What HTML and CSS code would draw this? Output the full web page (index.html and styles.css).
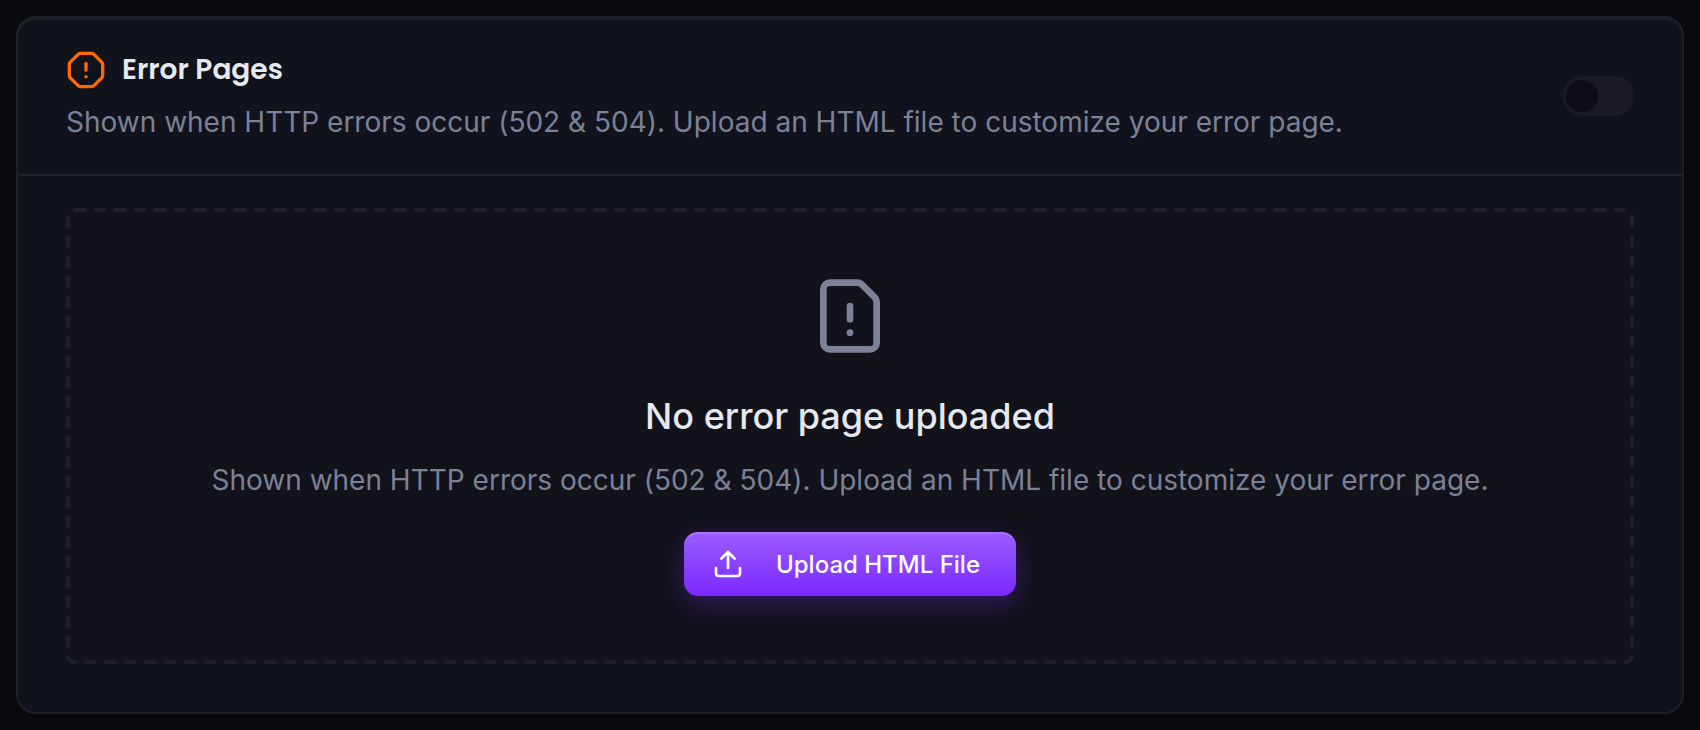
FILE: index.html
```html
<!DOCTYPE html>
<html lang="en">

<head>
    <meta charset="UTF-8">
    <meta name="viewport" content="width=device-width, initial-scale=1.0">
    <title>Error Pages</title>
    <link rel="stylesheet" href="styles.css">
</head>

<body>
    <section class="card">
        <header class="card-header">
            <div class="card-heading">
                <h2 class="card-title">
                    <svg class="icon icon-alert" viewBox="0 0 24 24" aria-hidden="true">
                        <path d="M12 16h.01" />
                        <path d="M12 8v4" />
                        <path d="M15.312 2a2 2 0 0 1 1.414.586l4.688 4.688A2 2 0 0 1 22 8.688v6.624a2 2 0 0 1-.586 1.414l-4.688 4.688a2 2 0 0 1-1.414.586H8.688a2 2 0 0 1-1.414-.586l-4.688-4.688A2 2 0 0 1 2 15.312V8.688a2 2 0 0 1 .586-1.414l4.688-4.688A2 2 0 0 1 8.688 2z" />
                    </svg>
                    <label for="errorPages">Error Pages</label>
                </h2>
                <p class="description">Shown when HTTP errors occur (502 &amp; 504). Upload an HTML file to customize your error page.</p>
            </div>
            <input type="checkbox" role="switch" id="errorPages" class="switch">
        </header>

        <div class="card-body">
            <div class="dropzone">
                <svg class="dropzone-outline" aria-hidden="true">
                    <rect x="2" y="2" rx="6" />
                </svg>
                <svg class="icon icon-file" viewBox="0 0 24 24" aria-hidden="true">
                    <path d="M6 22a2 2 0 0 1-2-2V4a2 2 0 0 1 2-2h8a2.4 2.4 0 0 1 1.704.706l3.588 3.588A2.4 2.4 0 0 1 20 8v12a2 2 0 0 1-2 2z" />
                    <path d="M12 9v4" />
                    <path d="M12 17h.01" />
                </svg>
                <h3 class="dropzone-title">No error page uploaded</h3>
                <p class="description">Shown when HTTP errors occur (502 &amp; 504). Upload an HTML file to customize your error page.</p>
                <button type="button" class="upload-button">
                    <svg class="icon icon-upload" viewBox="0 0 24 24" aria-hidden="true">
                        <path d="M12 3v12" />
                        <path d="m17 8-5-5-5 5" />
                        <path d="M21 15v4a2 2 0 0 1-2 2H5a2 2 0 0 1-2-2v-4" />
                    </svg>
                    Upload HTML File
                </button>
            </div>
        </div>
    </section>
</body>

</html>
```

FILE: styles.css
```css
* {
    box-sizing: border-box;
}

body {
    margin: 0;
    padding: 16px;
    background-color: #0a0b10;
    color: #e6e8f0;
    font-family: Inter, "Liberation Sans", sans-serif;
    text-rendering: optimizeSpeed;
}

h2,
h3,
p {
    margin: 0;
}

.icon {
    flex: none;
    fill: none;
    stroke: currentColor;
    stroke-width: 2;
    stroke-linecap: round;
    stroke-linejoin: round;
}

.card {
    background-color: #10131b;
    border: 2px solid #1f1f29;
    border-radius: 20px;
    box-shadow: 0 8px 32px rgba(0, 0, 0, 0.4), inset 0 2px 0 #1b1c25;
}

.card-header {
    display: flex;
    align-items: center;
    justify-content: space-between;
    gap: 32px;
    padding: 32px 48px;
    border-bottom: 2px solid #1f1f29;
}

.card-heading {
    display: flex;
    flex-direction: column;
    gap: 12px;
}

.card-title {
    display: flex;
    align-items: center;
    gap: 16px;
    font-family: Poppins, Inter, sans-serif;
    font-size: 28px;
    font-weight: 600;
    line-height: 40px;
}

.icon-alert {
    width: 40px;
    height: 40px;
    color: #ff6900;
}

.description {
    color: #7c8196;
    font-size: 28px;
    line-height: 40px;
}

/* Toggle */
.switch {
    appearance: none;
    flex: none;
    width: 72px;
    height: 40px;
    margin: 0;
    padding: 4px;
    border-radius: 20px;
    background-color: #1a1a22;
    cursor: pointer;
}

.switch::before {
    content: "";
    display: block;
    width: 32px;
    height: 32px;
    border-radius: 50%;
    background-color: #0c0c14;
    box-shadow: 0 20px 30px -6px rgba(0, 0, 0, 0.1);
    transition: transform 0.2s;
}

.switch:checked {
    background-color: #7f2dff;
}

.switch:checked::before {
    transform: translateX(32px);
}

.card-body {
    padding: 32px 48px 48px;
}

.dropzone {
    position: relative;
    display: flex;
    flex-direction: column;
    align-items: center;
    padding: 68px;
    border-radius: 8px;
    background-color: #12121a;
    text-align: center;
}

/* Dashed outline, longer dashes than a dashed border gives */
.dropzone-outline {
    position: absolute;
    inset: 0;
    width: 100%;
    height: 100%;
    pointer-events: none;
}

.dropzone-outline rect {
    width: calc(100% - 4px);
    height: calc(100% - 4px);
    fill: none;
    stroke: #1f1f29;
    stroke-width: 4;
    stroke-dasharray: 12 8;
}

.icon-file {
    width: 80px;
    height: 80px;
    color: #7c8196;
}

.dropzone-title {
    margin: 32px 0 16px;
    font-size: 36px;
    font-weight: 500;
    line-height: 56px;
}

.upload-button {
    display: flex;
    align-items: center;
    gap: 32px;
    min-width: 332px;
    height: 64px;
    margin-top: 32px;
    padding: 0 28px;
    border: none;
    border-radius: 14px;
    background: linear-gradient(#9b5cff, #7a28ff);
    box-shadow: 0 8px 24px rgba(122, 40, 255, 0.3), inset 0 2px 0 rgba(255, 255, 255, 0.15);
    color: #fff;
    font-family: inherit;
    font-size: 24px;
    font-weight: 500;
    cursor: pointer;
}

.icon-upload {
    width: 32px;
    height: 32px;
}
```
